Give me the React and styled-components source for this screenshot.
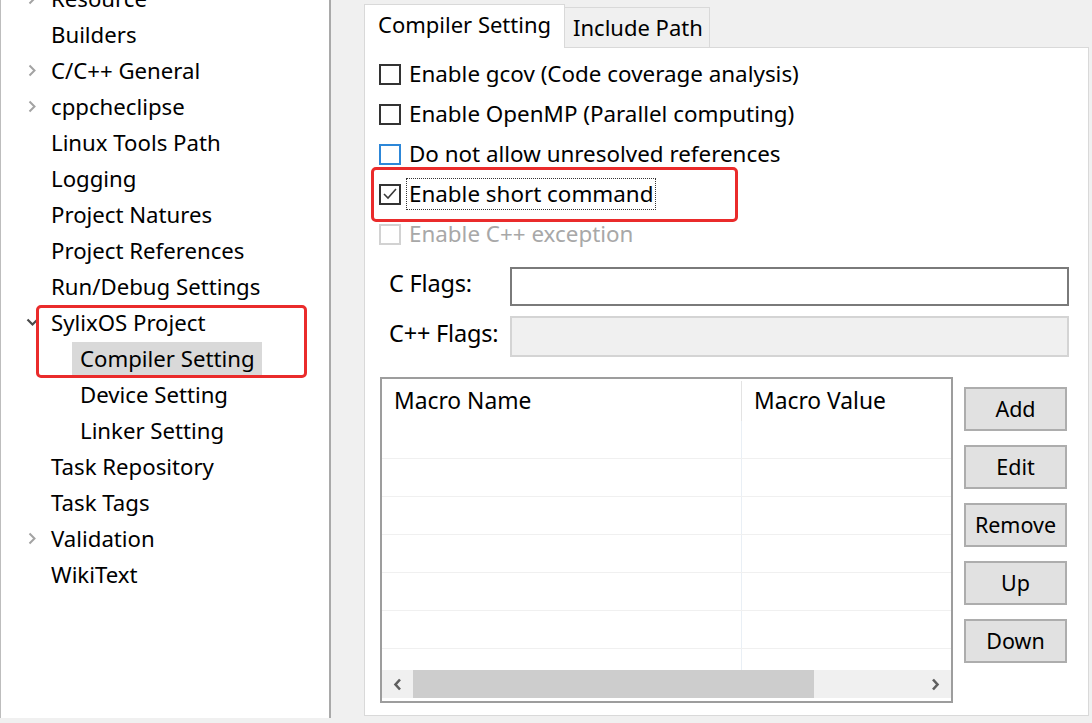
import React from 'react';
import styled, { createGlobalStyle } from 'styled-components';

const GlobalStyle = createGlobalStyle`
  html, body {
    margin: 0;
    padding: 0;
    background: #f0f0f0;
  }
  body {
    font-family: "Noto Sans", "Open Sans", sans-serif;
    color: #000;
  }
  #root {
    width: 1092px;
    height: 723px;
    overflow: hidden;
  }
`;

const Window = styled.div`
  display: flex;
  width: 1092px;
  height: 723px;
  background: #f0f0f0;
  overflow: hidden;
`;

/* ---------- left tree ---------- */

const Sidebar = styled.div`
  flex-shrink: 0;
  width: 328px;
  height: 718px;
  background: #fff;
  border-left: 1px solid #bdbdbd;
  border-right: 2px solid #a9a9a9;
  overflow: hidden;
`;

const TreeList = styled.ul`
  list-style: none;
  margin: -19px 0 0;
  padding: 0;
`;

const TreeRow = styled.li`
  display: flex;
  align-items: center;
  box-sizing: border-box;
  height: 36px;
  padding: 0 0 2px ${p => 25 + p.$depth * 29}px;
  font-size: 22.2px;
  white-space: nowrap;
`;

const Twisty = styled.span`
  display: flex;
  align-items: center;
  flex-shrink: 0;
  width: 25px;
`;

const TreeLabel = styled.span`
  margin-left: -8px;
  padding: 0 7px 0 8px;
  line-height: 33px;
  background: ${p => (p.$selected ? '#d9d9d9' : 'transparent')};
`;

const SideCallout = styled.div`
  position: relative;
  &::after {
    content: '';
    position: absolute;
    top: 0;
    bottom: -1px;
    left: 35px;
    width: 271px;
    box-sizing: border-box;
    border: 3px solid #ea2b2b;
    border-radius: 5px;
    pointer-events: none;
  }
`;

/* ---------- right side ---------- */

const Main = styled.div`
  flex: 1;
  display: flex;
  flex-direction: column;
  padding: 5px 3px 7px 33px;
  min-width: 0;
`;

const TabBar = styled.div`
  display: flex;
  align-items: flex-end;
  height: 43px;
  margin-bottom: -1px;
  position: relative;
  z-index: 1;
`;

const Tab = styled.div`
  display: flex;
  align-items: center;
  box-sizing: border-box;
  height: ${p => (p.$active ? 44 : 41)}px;
  padding: ${p => (p.$active ? '0 13px 5px 13px' : '0 6px 1px 8px')};
  border: 1px solid #d9d9d9;
  border-bottom: ${p => (p.$active ? 'none' : '1px solid #d9d9d9')};
  border-left: ${p => (p.$active ? '1px solid #d9d9d9' : 'none')};
  background: ${p => (p.$active ? '#fff' : '#f0f0f0')};
  font-size: 22px;
  white-space: nowrap;
`;

const Panel = styled.div`
  flex: 1;
  display: flex;
  flex-direction: column;
  min-height: 0;
  background: #fff;
  border: 1px solid #d9d9d9;
  padding: 6px 19px 12px 14px;
`;

const CheckRow = styled.div`
  position: relative;
  display: flex;
  align-items: center;
  gap: 8px;
  height: 40px;
  font-size: 22.4px;
  white-space: nowrap;
  color: ${p => (p.$disabled ? '#a8a8a8' : '#000')};
  ${p =>
    p.$annotated &&
    `
    &::after {
      content: '';
      position: absolute;
      top: -7px;
      bottom: -8px;
      left: -8px;
      width: 367px;
      box-sizing: border-box;
      border: 3px solid #ea2b2b;
      border-radius: 5px;
      pointer-events: none;
    }
  `}
`;

const Box = styled.span`
  display: flex;
  align-items: center;
  justify-content: center;
  box-sizing: border-box;
  flex-shrink: 0;
  width: 22px;
  height: 21px;
  border: 2px solid ${p => p.$color};
  background: #fff;
`;

const CheckText = styled.span`
  line-height: 29px;
  margin-left: -2px;
  padding: 0 2px 1px;
  outline: ${p => (p.$focused ? '1px dotted #333' : 'none')};
`;

const FlagsGrid = styled.div`
  display: grid;
  grid-template-columns: 121px 1fr;
  row-gap: 10px;
  align-items: center;
  margin: 13px 0 0 10px;
`;

const FlagLabel = styled.label`
  padding-bottom: 7px;
  font-size: 23.5px;
  letter-spacing: -0.2px;
  white-space: nowrap;
`;

const FlagInput = styled.div`
  box-sizing: border-box;
  height: ${p => (p.$disabled ? 41 : 39)}px;
  border: 2px solid ${p => (p.$disabled ? '#d4d4d4' : '#7a7a7a')};
  background: ${p => (p.$disabled ? '#f0f0f0' : '#fff')};
`;

const TableArea = styled.div`
  flex: 1;
  display: flex;
  gap: 11px;
  min-height: 0;
  margin: 20px 0 0 1px;
`;

const Table = styled.div`
  flex-shrink: 0;
  display: flex;
  flex-direction: column;
  width: 573px;
  box-sizing: border-box;
  border: 2px solid #9d9d9d;
  background: #fff;
  overflow: hidden;
`;

const HeaderRow = styled.div`
  display: grid;
  grid-template-columns: 360px 1fr;
  flex-shrink: 0;
  height: 42px;
`;

const HeaderCell = styled.div`
  display: flex;
  align-items: center;
  padding: 0 0 2px 12px;
  margin-top: 2px;
  font-size: 22.8px;
  white-space: nowrap;
  border-right: ${p => (p.$first ? '1px solid #e3e3e3' : 'none')};
`;

const Body = styled.div`
  flex: 1;
  min-height: 0;
  overflow: hidden;
`;

const BodyRow = styled.div`
  display: grid;
  grid-template-columns: 360px 1fr;
  box-sizing: border-box;
  height: 38px;
  border-bottom: 1px solid #f0f0f0;
`;

const BodyCell = styled.div`
  border-right: ${p => (p.$first ? '1px solid #e9eff5' : 'none')};
`;

const HScroll = styled.div`
  display: flex;
  flex-shrink: 0;
  height: 28px;
  margin-bottom: 3px;
  background: #f0f0f0;
`;

const ScrollArrow = styled.div`
  display: flex;
  align-items: center;
  justify-content: center;
  flex-shrink: 0;
  width: 31px;
`;

const Track = styled.div`
  flex: 1;
  display: flex;
`;

const Thumb = styled.div`
  background: #cdcdcd;
`;

const ButtonColumn = styled.div`
  display: flex;
  flex-direction: column;
  gap: 14px;
  padding-top: 10px;
  width: 103px;
`;

const Button = styled.button`
  box-sizing: border-box;
  height: 44px;
  border: 2px solid #adadad;
  background: #e1e1e1;
  font-family: inherit;
  font-size: 21.5px;
  color: #000;
  padding: 0 0 2px;
`;

/* ---------- icons ---------- */

const Collapsed = () => (
  <svg width="9" height="13" viewBox="0 0 9 13" style={{ marginLeft: 2 }}>
    <polyline points="1.5,1.5 6.5,6.5 1.5,11.5" fill="none" stroke="#a3a3a3" strokeWidth="2" />
  </svg>
);

const Expanded = () => (
  <svg width="13" height="9" viewBox="0 0 13 9" style={{ marginLeft: 0 }}>
    <polyline points="1.5,1.5 6.5,6.5 11.5,1.5" fill="none" stroke="#4a4a4a" strokeWidth="2.2" />
  </svg>
);

const Tick = () => (
  <svg width="16" height="14" viewBox="0 0 16 14">
    <polyline points="2,7 6,11 14,2" fill="none" stroke="#3a3a3a" strokeWidth="1.6" />
  </svg>
);

const ArrowLeft = () => (
  <svg width="9" height="13" viewBox="0 0 9 13">
    <polyline points="7,1.5 2.5,6.5 7,11.5" fill="none" stroke="#5f5f5f" strokeWidth="2.6" />
  </svg>
);

const ArrowRight = () => (
  <svg width="9" height="13" viewBox="0 0 9 13">
    <polyline points="2,1.5 6.5,6.5 2,11.5" fill="none" stroke="#5f5f5f" strokeWidth="2.6" />
  </svg>
);

/* ---------- data ---------- */

const topItems = [
  { label: 'Resource', arrow: 'c' },
  { label: 'Builders' },
  { label: 'C/C++ General', arrow: 'c' },
  { label: 'cppcheclipse', arrow: 'c' },
  { label: 'Linux Tools Path' },
  { label: 'Logging' },
  { label: 'Project Natures' },
  { label: 'Project References' },
  { label: 'Run/Debug Settings' },
];

const bottomItems = [
  { label: 'Device Setting', depth: 1 },
  { label: 'Linker Setting', depth: 1 },
  { label: 'Task Repository' },
  { label: 'Task Tags' },
  { label: 'Validation', arrow: 'c' },
  { label: 'WikiText' },
];

const options = [
  { label: 'Enable gcov (Code coverage analysis)', color: '#333' },
  { label: 'Enable OpenMP (Parallel computing)', color: '#333' },
  { label: 'Do not allow unresolved references', color: '#2d87d8' },
  { label: 'Enable short command', color: '#333', checked: true, focused: true, annotated: true },
  { label: 'Enable C++ exception', color: '#d2d2d2', disabled: true },
];

const Node = ({ item }) => (
  <TreeRow $depth={item.depth || 0}>
    <Twisty>
      {item.arrow === 'c' && <Collapsed />}
      {item.arrow === 'e' && <Expanded />}
    </Twisty>
    <TreeLabel $selected={item.selected}>{item.label}</TreeLabel>
  </TreeRow>
);

export default function App() {
  return (
    <>
      <GlobalStyle />
      <Window>
        <Sidebar>
          <TreeList>
            {topItems.map(it => (
              <Node key={it.label} item={it} />
            ))}
            <SideCallout>
              <Node item={{ label: 'SylixOS Project', arrow: 'e' }} />
              <Node item={{ label: 'Compiler Setting', depth: 1, selected: true }} />
            </SideCallout>
            {bottomItems.map(it => (
              <Node key={it.label} item={it} />
            ))}
          </TreeList>
        </Sidebar>

        <Main>
          <TabBar>
            <Tab $active>Compiler Setting</Tab>
            <Tab>Include Path</Tab>
          </TabBar>
          <Panel>
            {options.map(o => (
              <CheckRow key={o.label} $disabled={o.disabled} $annotated={o.annotated}>
                <Box $color={o.color}>{o.checked && <Tick />}</Box>
                <CheckText $focused={o.focused}>{o.label}</CheckText>
              </CheckRow>
            ))}

            <FlagsGrid>
              <FlagLabel>C Flags:</FlagLabel>
              <FlagInput />
              <FlagLabel>C++ Flags:</FlagLabel>
              <FlagInput $disabled />
            </FlagsGrid>

            <TableArea>
              <Table>
                <HeaderRow>
                  <HeaderCell $first>Macro Name</HeaderCell>
                  <HeaderCell>Macro Value</HeaderCell>
                </HeaderRow>
                <Body>
                  {Array.from({ length: 7 }).map((_, i) => (
                    <BodyRow key={i}>
                      <BodyCell $first />
                      <BodyCell />
                    </BodyRow>
                  ))}
                </Body>
                <HScroll>
                  <ScrollArrow>
                    <ArrowLeft />
                  </ScrollArrow>
                  <Track>
                    <Thumb style={{ width: '79%' }} />
                  </Track>
                  <ScrollArrow>
                    <ArrowRight />
                  </ScrollArrow>
                </HScroll>
              </Table>
              <ButtonColumn>
                {['Add', 'Edit', 'Remove', 'Up', 'Down'].map(b => (
                  <Button key={b}>{b}</Button>
                ))}
              </ButtonColumn>
            </TableArea>
          </Panel>
        </Main>
      </Window>
    </>
  );
}
